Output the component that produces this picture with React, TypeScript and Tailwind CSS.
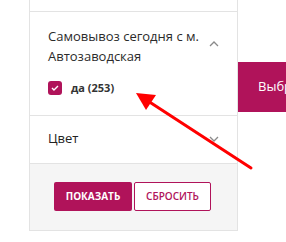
import React from "react";

const ChevronUp = () => (
  <svg width="10" height="6" viewBox="0 0 10 6" className="shrink-0">
    <path d="M1 5 L5 1 L9 5" fill="none" stroke="#8a8a8a" strokeWidth="1.3" />
  </svg>
);

const ChevronDown = () => (
  <svg width="10" height="6" viewBox="0 0 10 6" className="shrink-0">
    <path d="M1 1 L5 5 L9 1" fill="none" stroke="#8a8a8a" strokeWidth="1.3" />
  </svg>
);

const App: React.FC = () => {
  return (
    <div
      className="relative w-[286px] h-[242px] bg-white overflow-hidden flex"
      style={{ fontFamily: '"Open Sans", "Noto Sans", sans-serif' }}
    >
      <div className="w-[29px] shrink-0" />
      <div className="w-[209px] shrink-0 flex flex-col self-start border-x border-[#e3e3e3]">
        <div className="h-[11px]" />
        <div className="border-t border-[#e3e3e3] pt-[14px] pb-[18px] pl-[18px] pr-[18px]">
          <div className="flex items-center justify-between">
            <div className="text-[13px] leading-[20px] text-[#2b2b2b]">
              Самовывоз сегодня с м.
              <br />
              Автозаводская
            </div>
            <div className="-mt-[5px]">
              <ChevronUp />
            </div>
          </div>
          <div className="mt-[14px] flex items-center">
            <div className="w-[14px] h-[14px] rounded-[3px] bg-[#b0135a] flex items-center justify-center">
              <svg width="8" height="6" viewBox="0 0 8 6">
                <path d="M1 3 L3 5 L7 1" fill="none" stroke="#fff" strokeWidth="1.4" />
              </svg>
            </div>
            <span className="ml-[9px] text-[11px] font-bold text-[#333]">да (253)</span>
          </div>
        </div>
        <div className="border-t border-[#e3e3e3] h-[48px] pl-[18px] pr-[18px] flex items-center justify-between">
          <span className="text-[13px] text-[#222]">Цвет</span>
          <ChevronDown />
        </div>
        <div className="border-t border-b border-[#e3e3e3] bg-[#f5f5f5] h-[68px] pl-[24px] flex items-center gap-[2px]">
          <button className="w-[78px] h-[29px] rounded-[2px] bg-[#b0135a] text-white text-[10px] font-bold">
            ПОКАЗАТЬ
          </button>
          <button className="w-[77px] h-[29px] rounded-[2px] border border-[#b0135a] bg-white text-[#b0135a] text-[10px] font-semibold">
            СБРОСИТЬ
          </button>
        </div>
      </div>
      <div className="flex-1 mt-[62px] h-[50px] bg-[#b0135a] flex items-center pl-[20px] text-white text-[13px] whitespace-nowrap overflow-hidden">
        Выбрать
      </div>
      <svg
        className="absolute left-0 top-0 pointer-events-none"
        width="286"
        height="242"
        viewBox="0 0 286 242"
      >
        <line x1="251" y1="168" x2="148" y2="101" stroke="#ff0000" strokeWidth="3" strokeLinecap="round" />
        <polygon points="136,93 156,95 146,110" fill="#ff0000" />
      </svg>
    </div>
  );
};

export default App;
